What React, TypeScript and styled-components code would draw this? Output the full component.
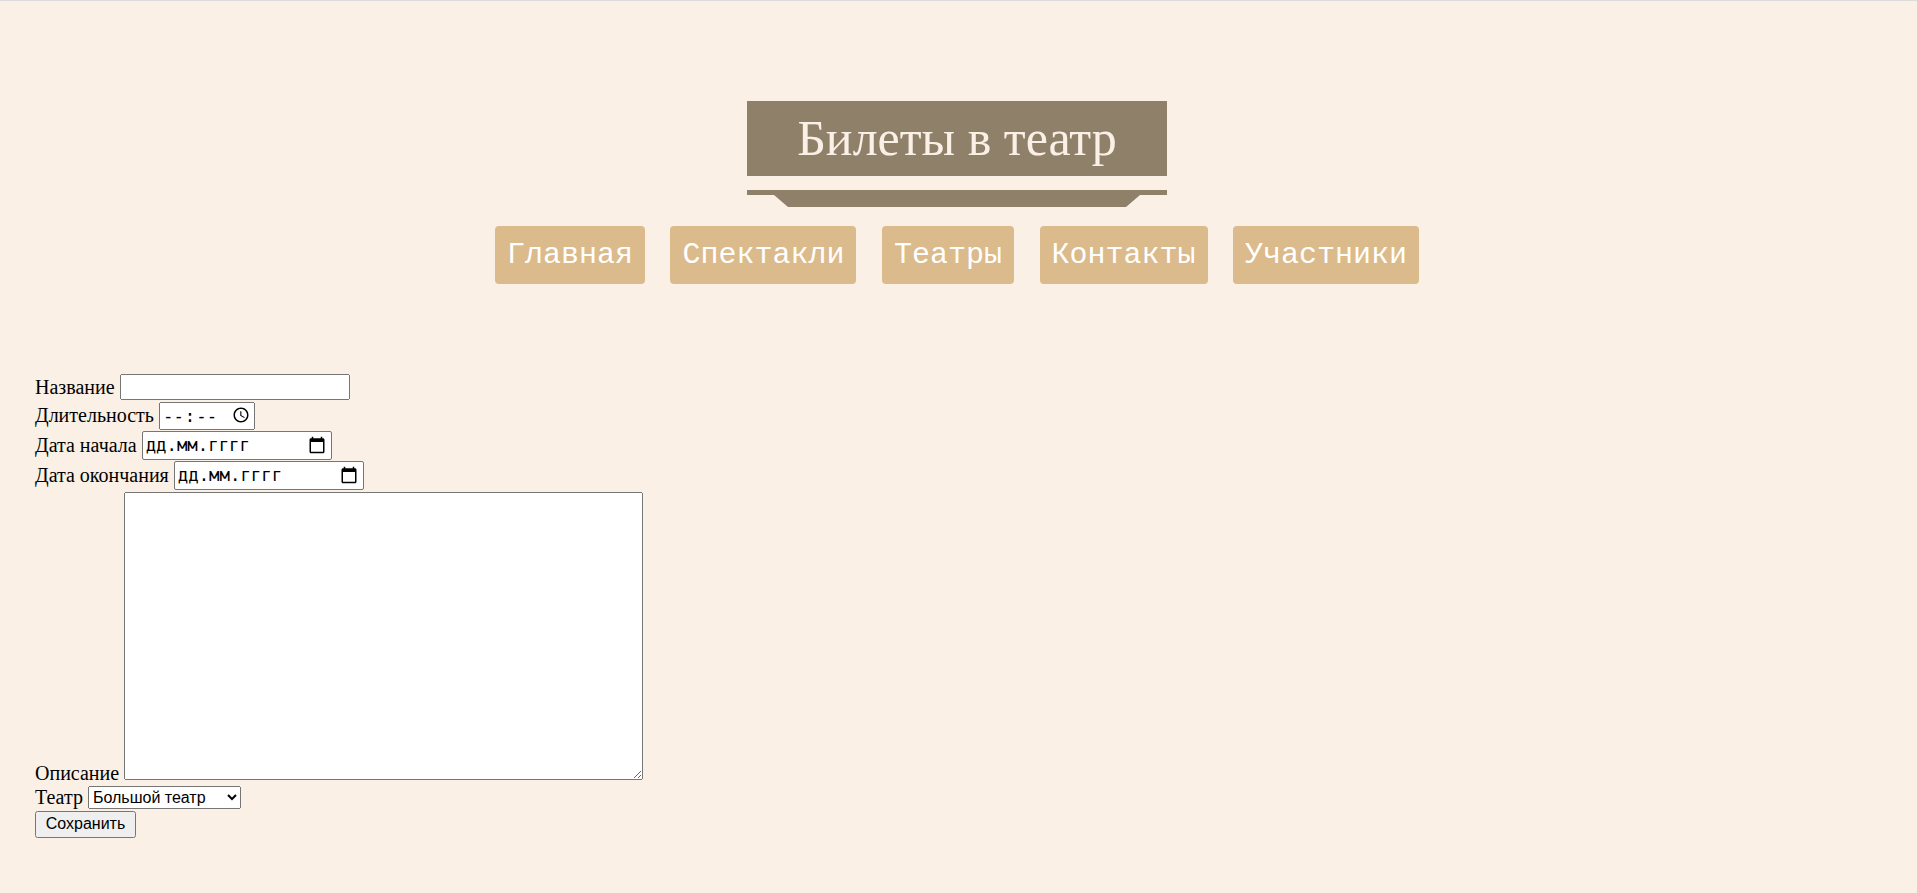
import React from "react";
import styled, { createGlobalStyle } from "styled-components";

const GlobalStyle = createGlobalStyle`
  html, body { margin: 0; padding: 0; }
  body {
    background: #faf0e6;
    font-family: "Liberation Serif", "Times New Roman", serif;
    font-size: 20px;
    color: #000;
  }
`;

const Page = styled.div`
  min-height: 892px;
  border-top: 1px solid #dcdcdc;
  padding-right: 3px;
  display: flex;
  flex-direction: column;
`;

const Header = styled.header`
  display: flex;
  flex-direction: column;
  align-items: center;
  padding-top: 100px;
`;

const Title = styled.h1`
  margin: 0;
  background: #8f806a;
  color: #faf0e6;
  font-family: "Liberation Serif", "Times New Roman", serif;
  font-weight: 400;
  font-size: 50px;
  line-height: 55px;
  padding: 10px 0;
  width: 420px;
  text-align: center;
  box-sizing: border-box;
`;

const RibbonSvg = styled.svg`
  display: block;
  margin-top: 14px;
`;

const Nav = styled.nav`
  display: flex;
  justify-content: center;
  gap: 25.5px;
  margin-top: 19px;
`;

const NavLink = styled.a`
  display: block;
  background: #dbba8b;
  color: #ffffff;
  font-family: "Liberation Mono", "Courier New", monospace;
  font-size: 30px;
  line-height: 34px;
  padding: 12px;
  border-radius: 4px;
  text-decoration: none;
`;

const Form = styled.form`
  margin-top: 89px;
  padding-left: 35px;
  display: flex;
  flex-direction: column;
`;

const Row = styled.div<{ $h: number; $align?: string }>`
  display: flex;
  align-items: ${(p) => p.$align || "center"};
  gap: 5px;
  height: ${(p) => p.$h}px;
`;

const Label = styled.label`
  font-family: "Liberation Serif", "Times New Roman", serif;
  font-size: 20px;
  line-height: 23px;
`;

const TextInput = styled.input`
  font-size: 17.33px;
  width: 230px;
  height: 26px;
  margin: 0;
  box-sizing: border-box;
`;

const TimeInput = styled.input`
  font-size: 17.33px;
  width: 96px;
  height: 28px;
  margin: 0;
  box-sizing: border-box;
`;

const DateBox = styled.div`
  width: 190px;
  height: 29px;
  box-sizing: border-box;
  background: #fff;
  border: 1px solid #767676;
  border-radius: 2px;
  display: flex;
  align-items: center;
  justify-content: space-between;
  padding: 0 5px 0 3px;
  cursor: default;
`;

const DateText = styled.span`
  font-family: "DejaVu Sans Mono", monospace;
  font-size: 17.33px;
  color: #000;
`;

const CalendarIcon = styled.svg`
  width: 18px;
  height: 18px;
  display: block;
`;

const TextArea = styled.textarea`
  width: 519px;
  height: 288px;
  margin: 1px 0 5px;
  box-sizing: border-box;
`;

const Select = styled.select`
  font-family: "Liberation Sans", Arial, sans-serif;
  font-size: 16px;
  width: 153px;
  height: 23px;
  margin: 0;
  box-sizing: border-box;
`;

const SubmitButton = styled.button`
  font-family: "Liberation Sans", Arial, sans-serif;
  font-size: 16px;
  width: 101px;
  height: 27px;
  margin: 0;
  box-sizing: border-box;
`;

const Ribbon = () => (
  <RibbonSvg width="420" height="17" viewBox="0 0 420 17">
    <rect x="0" y="0" width="420" height="5" fill="#8f806a" />
    <polygon points="27,5 393,5 379,17 41,17" fill="#8f806a" />
  </RibbonSvg>
);

const DateField = ({ id }: { id: string }) => (
  <DateBox id={id} role="textbox" aria-label="дата">
    <DateText>дд.мм.гггг</DateText>
    <CalendarIcon viewBox="0 0 24 24" aria-hidden="true">
      <path
        fill="#000"
        d="M20 3h-1V1h-2v2H7V1H5v2H4c-1.1 0-2 .9-2 2v16c0 1.1.9 2 2 2h16c1.1 0 2-.9 2-2V5c0-1.1-.9-2-2-2zm0 18H4V8h16v13z"
      />
    </CalendarIcon>
  </DateBox>
);

const links = ["Главная", "Спектакли", "Театры", "Контакты", "Участники"];

export default function App() {
  return (
    <>
      <GlobalStyle />
      <Page>
        <Header>
          <Title>Билеты в театр</Title>
          <Ribbon />
        </Header>
        <Nav>
          {links.map((l) => (
            <NavLink key={l} href="#">
              {l}
            </NavLink>
          ))}
        </Nav>
        <Form onSubmit={(e) => e.preventDefault()}>
          <Row $h={28}>
            <Label htmlFor="name">Название</Label>
            <TextInput id="name" type="text" />
          </Row>
          <Row $h={29}>
            <Label htmlFor="dur">Длительность</Label>
            <TimeInput id="dur" type="time" />
          </Row>
          <Row $h={30}>
            <Label>Дата начала</Label>
            <DateField id="start" />
          </Row>
          <Row $h={30}>
            <Label>Дата окончания</Label>
            <DateField id="end" />
          </Row>
          <Row $h={295} $align="flex-end">
            <Label htmlFor="desc">Описание</Label>
            <TextArea id="desc" />
          </Row>
          <Row $h={25}>
            <Label htmlFor="theatre">Театр</Label>
            <Select id="theatre" defaultValue="bolshoi">
              <option value="bolshoi">Большой театр</option>
              <option value="maly">Малый театр</option>
            </Select>
          </Row>
          <Row $h={28}>
            <SubmitButton type="submit">Сохранить</SubmitButton>
          </Row>
        </Form>
      </Page>
    </>
  );
}
